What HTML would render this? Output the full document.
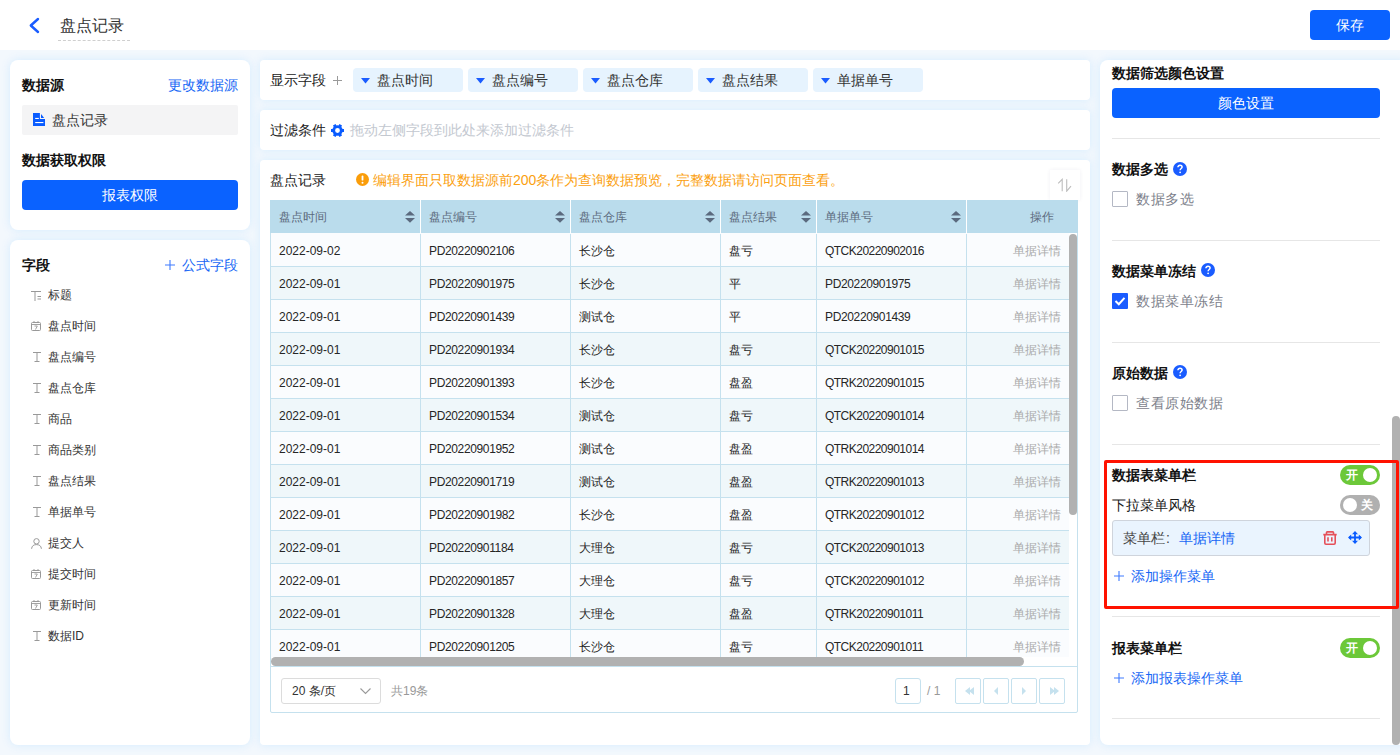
<!DOCTYPE html>
<html><head><meta charset="utf-8">
<style>
*{margin:0;padding:0;box-sizing:border-box}
html,body{width:1400px;height:755px;overflow:hidden}
body{font-family:"Liberation Sans",sans-serif;background:#f3f8fd;position:relative;color:#333;font-size:14px}
.a{position:absolute;white-space:nowrap}
.hdr{position:absolute;left:0;top:0;width:1400px;height:50px;background:#fff}
.card{position:absolute;background:#fff;box-shadow:0 0 8px rgba(208,234,255,0.9)}
.t14{font-size:14px;line-height:20px}
.t12{font-size:12px;line-height:16px}
.b{font-weight:bold;color:#111}
.blue{color:#1767f5}
.btn{position:absolute;background:#0a62ff;color:#fff;border-radius:4px;text-align:center;font-size:14px}
</style></head><body>
<!-- header -->
<div class="hdr">
  <svg class="a" style="left:28px;top:17px" width="12" height="17" viewBox="0 0 12 17"><path d="M10 2 L2.8 8.5 L10 15" fill="none" stroke="#1a5cff" stroke-width="2.4" stroke-linecap="round" stroke-linejoin="round"/></svg>
  <div class="a" style="left:60px;top:15px;font-size:16px;line-height:22px;color:#333">盘点记录</div>
  <div class="a" style="left:58px;top:40px;width:72px;height:0;border-top:1px dashed #cfcfcf"></div>
  <div class="btn" style="left:1310px;top:10px;width:80px;height:30px;line-height:30px">保存</div>
</div>

<!-- left card 1 -->
<div class="card" style="left:10px;top:60px;width:240px;height:170px;border-radius:8px"></div>
<div class="a t14 b" style="left:22px;top:75px">数据源</div>
<div class="a t14 blue" style="left:168px;top:75px">更改数据源</div>
<div class="a" style="left:22px;top:105px;width:216px;height:30px;background:#f4f4f5;border-radius:2px"></div>
<svg class="a" style="left:33px;top:113px" width="12" height="13" viewBox="0 0 12 13"><path d="M0 0H6.9V6H12V13H0Z" fill="#0a5cff"/><path d="M8 0.9V4.9H11.2Z" fill="#0a5cff"/><rect x="2.2" y="4.9" width="3.6" height="1.1" fill="#fff"/><rect x="2.2" y="9" width="8.2" height="1.1" fill="#fff"/></svg>
<div class="a t14" style="left:52px;top:110px;color:#333">盘点记录</div>
<div class="a t14 b" style="left:22px;top:150px">数据获取权限</div>
<div class="btn" style="left:22px;top:180px;width:216px;height:30px;line-height:30px">报表权限</div>

<!-- left card 2 -->
<div class="card" style="left:10px;top:240px;width:240px;height:505px;border-radius:8px"></div>
<div class="a t14 b" style="left:22px;top:255px">字段</div>
<svg class="a" style="left:165px;top:260px" width="10" height="10" viewBox="0 0 10 10"><path d="M5 0V10M0 5H10" stroke="#3f7bff" stroke-width="1.1"/></svg><div class="a t14 blue" style="left:182px;top:255px">公式字段</div>
<svg class="a" style="left:31px;top:291px" width="10" height="10" viewBox="0 0 10 10"><path d="M0 0.5H10M4 0.5V10M6.5 5.5H10M6.5 8H10" stroke="#999" stroke-width="1" fill="none"/></svg>
<div class="a t12" style="left:48px;top:287px;color:#333">标题</div>
<svg class="a" style="left:31px;top:321px" width="10" height="10" viewBox="0 0 10 10"><rect x="0.5" y="1.5" width="9" height="8" rx="1" stroke="#999" fill="none"/><path d="M0.5 3.5H9.5M3 0V2M7 0V2M3.5 5H6.3L4.5 8.5" stroke="#999" stroke-width="0.9" fill="none"/></svg>
<div class="a t12" style="left:48px;top:318px;color:#333">盘点时间</div>
<svg class="a" style="left:33px;top:352px" width="8" height="10" viewBox="0 0 8 10"><path d="M0 0.5H8M4 0.5V9.5M1.5 9.5H6.5" stroke="#999" stroke-width="1" fill="none"/></svg>
<div class="a t12" style="left:48px;top:349px;color:#333">盘点编号</div>
<svg class="a" style="left:33px;top:383px" width="8" height="10" viewBox="0 0 8 10"><path d="M0 0.5H8M4 0.5V9.5M1.5 9.5H6.5" stroke="#999" stroke-width="1" fill="none"/></svg>
<div class="a t12" style="left:48px;top:380px;color:#333">盘点仓库</div>
<svg class="a" style="left:33px;top:414px" width="8" height="10" viewBox="0 0 8 10"><path d="M0 0.5H8M4 0.5V9.5M1.5 9.5H6.5" stroke="#999" stroke-width="1" fill="none"/></svg>
<div class="a t12" style="left:48px;top:411px;color:#333">商品</div>
<svg class="a" style="left:33px;top:445px" width="8" height="10" viewBox="0 0 8 10"><path d="M0 0.5H8M4 0.5V9.5M1.5 9.5H6.5" stroke="#999" stroke-width="1" fill="none"/></svg>
<div class="a t12" style="left:48px;top:442px;color:#333">商品类别</div>
<svg class="a" style="left:33px;top:476px" width="8" height="10" viewBox="0 0 8 10"><path d="M0 0.5H8M4 0.5V9.5M1.5 9.5H6.5" stroke="#999" stroke-width="1" fill="none"/></svg>
<div class="a t12" style="left:48px;top:473px;color:#333">盘点结果</div>
<svg class="a" style="left:33px;top:507px" width="8" height="10" viewBox="0 0 8 10"><path d="M0 0.5H8M4 0.5V9.5M1.5 9.5H6.5" stroke="#999" stroke-width="1" fill="none"/></svg>
<div class="a t12" style="left:48px;top:504px;color:#333">单据单号</div>
<svg class="a" style="left:31px;top:538px" width="11" height="11" viewBox="0 0 11 11"><circle cx="5.5" cy="3.3" r="2.7" stroke="#999" fill="none"/><path d="M0.6 10.8C0.8 7.8 2.8 6.6 5.5 6.6C8.2 6.6 10.2 7.8 10.4 10.8" stroke="#999" fill="none"/></svg>
<div class="a t12" style="left:48px;top:535px;color:#333">提交人</div>
<svg class="a" style="left:31px;top:569px" width="10" height="10" viewBox="0 0 10 10"><rect x="0.5" y="1.5" width="9" height="8" rx="1" stroke="#999" fill="none"/><path d="M0.5 3.5H9.5M3 0V2M7 0V2M3.5 5H6.3L4.5 8.5" stroke="#999" stroke-width="0.9" fill="none"/></svg>
<div class="a t12" style="left:48px;top:566px;color:#333">提交时间</div>
<svg class="a" style="left:31px;top:600px" width="10" height="10" viewBox="0 0 10 10"><rect x="0.5" y="1.5" width="9" height="8" rx="1" stroke="#999" fill="none"/><path d="M0.5 3.5H9.5M3 0V2M7 0V2M3.5 5H6.3L4.5 8.5" stroke="#999" stroke-width="0.9" fill="none"/></svg>
<div class="a t12" style="left:48px;top:597px;color:#333">更新时间</div>
<svg class="a" style="left:33px;top:631px" width="8" height="10" viewBox="0 0 8 10"><path d="M0 0.5H8M4 0.5V9.5M1.5 9.5H6.5" stroke="#999" stroke-width="1" fill="none"/></svg>
<div class="a t12" style="left:48px;top:628px;color:#333">数据ID</div>

<!-- middle -->
<div class="card" style="left:260px;top:60px;width:830px;height:40px;border-radius:4px"></div>
<div class="a t14" style="left:270px;top:70px;color:#222">显示字段</div><svg class="a" style="left:333px;top:76px" width="9" height="9" viewBox="0 0 9 9"><path d="M4.5 0V9M0 4.5H9" stroke="#9a9a9a" stroke-width="1"/></svg>
<div class="a" style="left:353px;top:68px;width:110px;height:24px;background:#e6f3fe;border-radius:4px"></div>
<svg class="a" style="left:361px;top:77.5px" width="9" height="6" viewBox="0 0 9 6"><path d="M0 0H9L4.5 5.5Z" fill="#1a5cff"/></svg>
<div class="a t14" style="left:377px;top:70px;color:#333">盘点时间</div>
<div class="a" style="left:468px;top:68px;width:110px;height:24px;background:#e6f3fe;border-radius:4px"></div>
<svg class="a" style="left:476px;top:77.5px" width="9" height="6" viewBox="0 0 9 6"><path d="M0 0H9L4.5 5.5Z" fill="#1a5cff"/></svg>
<div class="a t14" style="left:492px;top:70px;color:#333">盘点编号</div>
<div class="a" style="left:583px;top:68px;width:110px;height:24px;background:#e6f3fe;border-radius:4px"></div>
<svg class="a" style="left:591px;top:77.5px" width="9" height="6" viewBox="0 0 9 6"><path d="M0 0H9L4.5 5.5Z" fill="#1a5cff"/></svg>
<div class="a t14" style="left:607px;top:70px;color:#333">盘点仓库</div>
<div class="a" style="left:698px;top:68px;width:110px;height:24px;background:#e6f3fe;border-radius:4px"></div>
<svg class="a" style="left:706px;top:77.5px" width="9" height="6" viewBox="0 0 9 6"><path d="M0 0H9L4.5 5.5Z" fill="#1a5cff"/></svg>
<div class="a t14" style="left:722px;top:70px;color:#333">盘点结果</div>
<div class="a" style="left:813px;top:68px;width:110px;height:24px;background:#e6f3fe;border-radius:4px"></div>
<svg class="a" style="left:821px;top:77.5px" width="9" height="6" viewBox="0 0 9 6"><path d="M0 0H9L4.5 5.5Z" fill="#1a5cff"/></svg>
<div class="a t14" style="left:837px;top:70px;color:#333">单据单号</div>
<div class="card" style="left:260px;top:110px;width:830px;height:40px;border-radius:4px"></div>
<div class="a t14" style="left:270px;top:120px;color:#222">过滤条件</div>
<svg class="a" style="left:331px;top:123.5px" width="13" height="13" viewBox="-6.5 -6.5 13 13"><circle r="3.8" stroke="#0a5cff" stroke-width="2.8" fill="none"/><rect x="-1.5" y="-6.5" width="3" height="3" transform="rotate(30)" fill="#0a5cff"/><rect x="-1.5" y="-6.5" width="3" height="3" transform="rotate(90)" fill="#0a5cff"/><rect x="-1.5" y="-6.5" width="3" height="3" transform="rotate(150)" fill="#0a5cff"/><rect x="-1.5" y="-6.5" width="3" height="3" transform="rotate(210)" fill="#0a5cff"/><rect x="-1.5" y="-6.5" width="3" height="3" transform="rotate(270)" fill="#0a5cff"/><rect x="-1.5" y="-6.5" width="3" height="3" transform="rotate(330)" fill="#0a5cff"/></svg>
<div class="a t14" style="left:350px;top:120px;color:#c3c8d0">拖动左侧字段到此处来添加过滤条件</div>

<div class="card" style="left:260px;top:160px;width:830px;height:585px;border-radius:4px"></div>
<div class="a t14" style="left:270px;top:170px;color:#222">盘点记录</div>
<svg class="a" style="left:356px;top:173px" width="13" height="13" viewBox="0 0 13 13"><circle cx="6.5" cy="6.5" r="6.5" fill="#fa9d0a"/><rect x="5.6" y="2.6" width="1.8" height="5" rx="0.9" fill="#fff"/><circle cx="6.5" cy="9.7" r="1" fill="#fff"/></svg>
<div class="a t14" style="left:373px;top:170px;color:#fb9f10">编辑界面只取数据源前200条作为查询数据预览，完整数据请访问页面查看。</div>
<div class="a" style="left:1050px;top:170px;width:30px;height:30px;background:#fff;box-shadow:0 0 4px rgba(60,40,120,0.07)"></div><svg class="a" style="left:1057px;top:178px" width="16" height="14" viewBox="0 0 16 14"><path d="M5.2 13.2V1.3L1.2 5.3M9.7 1.3V13.2L14 8.2" stroke="#bdbdbd" stroke-width="1.1" fill="none"/></svg>
<div class="a" style="left:270px;top:200px;width:808px;height:513px;border:1px solid #c5e1ee;border-radius:2px"></div>
<div class="a" style="left:270px;top:200px;width:808px;height:33px;background:#badcec"></div>
<div class="a" style="left:420px;top:200px;width:1px;height:33px;background:#fff"></div>
<div class="a" style="left:570px;top:200px;width:1px;height:33px;background:#fff"></div>
<div class="a" style="left:720px;top:200px;width:1px;height:33px;background:#fff"></div>
<div class="a" style="left:816px;top:200px;width:1px;height:33px;background:#fff"></div>
<div class="a" style="left:966px;top:200px;width:1px;height:33px;background:#fff"></div>
<div class="a t12" style="left:279px;top:209px;color:#5c6b7e">盘点时间</div>
<svg class="a" style="left:405px;top:210.5px" width="10" height="12" viewBox="0 0 10 12"><path d="M0 4.6H10L5 0Z M0 7.1H10L5 11.7Z" fill="#5b6a7e"/></svg>
<div class="a t12" style="left:429px;top:209px;color:#5c6b7e">盘点编号</div>
<svg class="a" style="left:555px;top:210.5px" width="10" height="12" viewBox="0 0 10 12"><path d="M0 4.6H10L5 0Z M0 7.1H10L5 11.7Z" fill="#5b6a7e"/></svg>
<div class="a t12" style="left:579px;top:209px;color:#5c6b7e">盘点仓库</div>
<svg class="a" style="left:705px;top:210.5px" width="10" height="12" viewBox="0 0 10 12"><path d="M0 4.6H10L5 0Z M0 7.1H10L5 11.7Z" fill="#5b6a7e"/></svg>
<div class="a t12" style="left:729px;top:209px;color:#5c6b7e">盘点结果</div>
<svg class="a" style="left:801px;top:210.5px" width="10" height="12" viewBox="0 0 10 12"><path d="M0 4.6H10L5 0Z M0 7.1H10L5 11.7Z" fill="#5b6a7e"/></svg>
<div class="a t12" style="left:825px;top:209px;color:#5c6b7e">单据单号</div>
<svg class="a" style="left:951px;top:210.5px" width="10" height="12" viewBox="0 0 10 12"><path d="M0 4.6H10L5 0Z M0 7.1H10L5 11.7Z" fill="#5b6a7e"/></svg>
<div class="a t12" style="left:1030px;top:209px;color:#5c6b7e">操作</div>
<div class="a" style="left:271px;top:233px;width:798px;height:424px;overflow:hidden">
<div class="a" style="left:0;top:0px;width:798px;height:34px;background:#fafcfe;border-bottom:1px solid #c5e1ee"></div>
<div class="a" style="left:149px;top:1px;width:1px;height:33px;background:#c5e1ee"></div>
<div class="a" style="left:299px;top:1px;width:1px;height:33px;background:#c5e1ee"></div>
<div class="a" style="left:449px;top:1px;width:1px;height:33px;background:#c5e1ee"></div>
<div class="a" style="left:545px;top:1px;width:1px;height:33px;background:#c5e1ee"></div>
<div class="a" style="left:695px;top:1px;width:1px;height:33px;background:#c5e1ee"></div>
<div class="a t12" style="left:8px;top:10px;color:#262626;">2022-09-02</div>
<div class="a t12" style="left:158px;top:10px;color:#262626;letter-spacing:-0.36px;">PD20220902106</div>
<div class="a t12" style="left:308px;top:10px;color:#262626;">长沙仓</div>
<div class="a t12" style="left:458px;top:10px;color:#262626;">盘亏</div>
<div class="a t12" style="left:554px;top:10px;color:#262626;letter-spacing:-0.52px;">QTCK20220902016</div>
<div class="a t12" style="left:742px;top:10px;color:#aaa">单据详情</div>
<div class="a" style="left:0;top:34px;width:798px;height:33px;background:#eff7fa;border-bottom:1px solid #c5e1ee"></div>
<div class="a" style="left:149px;top:34px;width:1px;height:33px;background:#c5e1ee"></div>
<div class="a" style="left:299px;top:34px;width:1px;height:33px;background:#c5e1ee"></div>
<div class="a" style="left:449px;top:34px;width:1px;height:33px;background:#c5e1ee"></div>
<div class="a" style="left:545px;top:34px;width:1px;height:33px;background:#c5e1ee"></div>
<div class="a" style="left:695px;top:34px;width:1px;height:33px;background:#c5e1ee"></div>
<div class="a t12" style="left:8px;top:43px;color:#262626;">2022-09-01</div>
<div class="a t12" style="left:158px;top:43px;color:#262626;letter-spacing:-0.36px;">PD20220901975</div>
<div class="a t12" style="left:308px;top:43px;color:#262626;">长沙仓</div>
<div class="a t12" style="left:458px;top:43px;color:#262626;">平</div>
<div class="a t12" style="left:554px;top:43px;color:#262626;letter-spacing:-0.36px;">PD20220901975</div>
<div class="a t12" style="left:742px;top:43px;color:#aaa">单据详情</div>
<div class="a" style="left:0;top:67px;width:798px;height:33px;background:#fafcfe;border-bottom:1px solid #c5e1ee"></div>
<div class="a" style="left:149px;top:67px;width:1px;height:33px;background:#c5e1ee"></div>
<div class="a" style="left:299px;top:67px;width:1px;height:33px;background:#c5e1ee"></div>
<div class="a" style="left:449px;top:67px;width:1px;height:33px;background:#c5e1ee"></div>
<div class="a" style="left:545px;top:67px;width:1px;height:33px;background:#c5e1ee"></div>
<div class="a" style="left:695px;top:67px;width:1px;height:33px;background:#c5e1ee"></div>
<div class="a t12" style="left:8px;top:76px;color:#262626;">2022-09-01</div>
<div class="a t12" style="left:158px;top:76px;color:#262626;letter-spacing:-0.36px;">PD20220901439</div>
<div class="a t12" style="left:308px;top:76px;color:#262626;">测试仓</div>
<div class="a t12" style="left:458px;top:76px;color:#262626;">平</div>
<div class="a t12" style="left:554px;top:76px;color:#262626;letter-spacing:-0.36px;">PD20220901439</div>
<div class="a t12" style="left:742px;top:76px;color:#aaa">单据详情</div>
<div class="a" style="left:0;top:100px;width:798px;height:33px;background:#eff7fa;border-bottom:1px solid #c5e1ee"></div>
<div class="a" style="left:149px;top:100px;width:1px;height:33px;background:#c5e1ee"></div>
<div class="a" style="left:299px;top:100px;width:1px;height:33px;background:#c5e1ee"></div>
<div class="a" style="left:449px;top:100px;width:1px;height:33px;background:#c5e1ee"></div>
<div class="a" style="left:545px;top:100px;width:1px;height:33px;background:#c5e1ee"></div>
<div class="a" style="left:695px;top:100px;width:1px;height:33px;background:#c5e1ee"></div>
<div class="a t12" style="left:8px;top:109px;color:#262626;">2022-09-01</div>
<div class="a t12" style="left:158px;top:109px;color:#262626;letter-spacing:-0.36px;">PD20220901934</div>
<div class="a t12" style="left:308px;top:109px;color:#262626;">长沙仓</div>
<div class="a t12" style="left:458px;top:109px;color:#262626;">盘亏</div>
<div class="a t12" style="left:554px;top:109px;color:#262626;letter-spacing:-0.52px;">QTCK20220901015</div>
<div class="a t12" style="left:742px;top:109px;color:#aaa">单据详情</div>
<div class="a" style="left:0;top:133px;width:798px;height:33px;background:#fafcfe;border-bottom:1px solid #c5e1ee"></div>
<div class="a" style="left:149px;top:133px;width:1px;height:33px;background:#c5e1ee"></div>
<div class="a" style="left:299px;top:133px;width:1px;height:33px;background:#c5e1ee"></div>
<div class="a" style="left:449px;top:133px;width:1px;height:33px;background:#c5e1ee"></div>
<div class="a" style="left:545px;top:133px;width:1px;height:33px;background:#c5e1ee"></div>
<div class="a" style="left:695px;top:133px;width:1px;height:33px;background:#c5e1ee"></div>
<div class="a t12" style="left:8px;top:142px;color:#262626;">2022-09-01</div>
<div class="a t12" style="left:158px;top:142px;color:#262626;letter-spacing:-0.36px;">PD20220901393</div>
<div class="a t12" style="left:308px;top:142px;color:#262626;">长沙仓</div>
<div class="a t12" style="left:458px;top:142px;color:#262626;">盘盈</div>
<div class="a t12" style="left:554px;top:142px;color:#262626;letter-spacing:-0.52px;">QTRK20220901015</div>
<div class="a t12" style="left:742px;top:142px;color:#aaa">单据详情</div>
<div class="a" style="left:0;top:166px;width:798px;height:33px;background:#eff7fa;border-bottom:1px solid #c5e1ee"></div>
<div class="a" style="left:149px;top:166px;width:1px;height:33px;background:#c5e1ee"></div>
<div class="a" style="left:299px;top:166px;width:1px;height:33px;background:#c5e1ee"></div>
<div class="a" style="left:449px;top:166px;width:1px;height:33px;background:#c5e1ee"></div>
<div class="a" style="left:545px;top:166px;width:1px;height:33px;background:#c5e1ee"></div>
<div class="a" style="left:695px;top:166px;width:1px;height:33px;background:#c5e1ee"></div>
<div class="a t12" style="left:8px;top:175px;color:#262626;">2022-09-01</div>
<div class="a t12" style="left:158px;top:175px;color:#262626;letter-spacing:-0.36px;">PD20220901534</div>
<div class="a t12" style="left:308px;top:175px;color:#262626;">测试仓</div>
<div class="a t12" style="left:458px;top:175px;color:#262626;">盘亏</div>
<div class="a t12" style="left:554px;top:175px;color:#262626;letter-spacing:-0.52px;">QTCK20220901014</div>
<div class="a t12" style="left:742px;top:175px;color:#aaa">单据详情</div>
<div class="a" style="left:0;top:199px;width:798px;height:33px;background:#fafcfe;border-bottom:1px solid #c5e1ee"></div>
<div class="a" style="left:149px;top:199px;width:1px;height:33px;background:#c5e1ee"></div>
<div class="a" style="left:299px;top:199px;width:1px;height:33px;background:#c5e1ee"></div>
<div class="a" style="left:449px;top:199px;width:1px;height:33px;background:#c5e1ee"></div>
<div class="a" style="left:545px;top:199px;width:1px;height:33px;background:#c5e1ee"></div>
<div class="a" style="left:695px;top:199px;width:1px;height:33px;background:#c5e1ee"></div>
<div class="a t12" style="left:8px;top:208px;color:#262626;">2022-09-01</div>
<div class="a t12" style="left:158px;top:208px;color:#262626;letter-spacing:-0.36px;">PD20220901952</div>
<div class="a t12" style="left:308px;top:208px;color:#262626;">测试仓</div>
<div class="a t12" style="left:458px;top:208px;color:#262626;">盘盈</div>
<div class="a t12" style="left:554px;top:208px;color:#262626;letter-spacing:-0.52px;">QTRK20220901014</div>
<div class="a t12" style="left:742px;top:208px;color:#aaa">单据详情</div>
<div class="a" style="left:0;top:232px;width:798px;height:33px;background:#eff7fa;border-bottom:1px solid #c5e1ee"></div>
<div class="a" style="left:149px;top:232px;width:1px;height:33px;background:#c5e1ee"></div>
<div class="a" style="left:299px;top:232px;width:1px;height:33px;background:#c5e1ee"></div>
<div class="a" style="left:449px;top:232px;width:1px;height:33px;background:#c5e1ee"></div>
<div class="a" style="left:545px;top:232px;width:1px;height:33px;background:#c5e1ee"></div>
<div class="a" style="left:695px;top:232px;width:1px;height:33px;background:#c5e1ee"></div>
<div class="a t12" style="left:8px;top:241px;color:#262626;">2022-09-01</div>
<div class="a t12" style="left:158px;top:241px;color:#262626;letter-spacing:-0.36px;">PD20220901719</div>
<div class="a t12" style="left:308px;top:241px;color:#262626;">测试仓</div>
<div class="a t12" style="left:458px;top:241px;color:#262626;">盘盈</div>
<div class="a t12" style="left:554px;top:241px;color:#262626;letter-spacing:-0.52px;">QTRK20220901013</div>
<div class="a t12" style="left:742px;top:241px;color:#aaa">单据详情</div>
<div class="a" style="left:0;top:265px;width:798px;height:33px;background:#fafcfe;border-bottom:1px solid #c5e1ee"></div>
<div class="a" style="left:149px;top:265px;width:1px;height:33px;background:#c5e1ee"></div>
<div class="a" style="left:299px;top:265px;width:1px;height:33px;background:#c5e1ee"></div>
<div class="a" style="left:449px;top:265px;width:1px;height:33px;background:#c5e1ee"></div>
<div class="a" style="left:545px;top:265px;width:1px;height:33px;background:#c5e1ee"></div>
<div class="a" style="left:695px;top:265px;width:1px;height:33px;background:#c5e1ee"></div>
<div class="a t12" style="left:8px;top:274px;color:#262626;">2022-09-01</div>
<div class="a t12" style="left:158px;top:274px;color:#262626;letter-spacing:-0.36px;">PD20220901982</div>
<div class="a t12" style="left:308px;top:274px;color:#262626;">长沙仓</div>
<div class="a t12" style="left:458px;top:274px;color:#262626;">盘盈</div>
<div class="a t12" style="left:554px;top:274px;color:#262626;letter-spacing:-0.52px;">QTRK20220901012</div>
<div class="a t12" style="left:742px;top:274px;color:#aaa">单据详情</div>
<div class="a" style="left:0;top:298px;width:798px;height:33px;background:#eff7fa;border-bottom:1px solid #c5e1ee"></div>
<div class="a" style="left:149px;top:298px;width:1px;height:33px;background:#c5e1ee"></div>
<div class="a" style="left:299px;top:298px;width:1px;height:33px;background:#c5e1ee"></div>
<div class="a" style="left:449px;top:298px;width:1px;height:33px;background:#c5e1ee"></div>
<div class="a" style="left:545px;top:298px;width:1px;height:33px;background:#c5e1ee"></div>
<div class="a" style="left:695px;top:298px;width:1px;height:33px;background:#c5e1ee"></div>
<div class="a t12" style="left:8px;top:307px;color:#262626;">2022-09-01</div>
<div class="a t12" style="left:158px;top:307px;color:#262626;letter-spacing:-0.36px;">PD20220901184</div>
<div class="a t12" style="left:308px;top:307px;color:#262626;">大理仓</div>
<div class="a t12" style="left:458px;top:307px;color:#262626;">盘亏</div>
<div class="a t12" style="left:554px;top:307px;color:#262626;letter-spacing:-0.52px;">QTCK20220901013</div>
<div class="a t12" style="left:742px;top:307px;color:#aaa">单据详情</div>
<div class="a" style="left:0;top:331px;width:798px;height:33px;background:#fafcfe;border-bottom:1px solid #c5e1ee"></div>
<div class="a" style="left:149px;top:331px;width:1px;height:33px;background:#c5e1ee"></div>
<div class="a" style="left:299px;top:331px;width:1px;height:33px;background:#c5e1ee"></div>
<div class="a" style="left:449px;top:331px;width:1px;height:33px;background:#c5e1ee"></div>
<div class="a" style="left:545px;top:331px;width:1px;height:33px;background:#c5e1ee"></div>
<div class="a" style="left:695px;top:331px;width:1px;height:33px;background:#c5e1ee"></div>
<div class="a t12" style="left:8px;top:340px;color:#262626;">2022-09-01</div>
<div class="a t12" style="left:158px;top:340px;color:#262626;letter-spacing:-0.36px;">PD20220901857</div>
<div class="a t12" style="left:308px;top:340px;color:#262626;">大理仓</div>
<div class="a t12" style="left:458px;top:340px;color:#262626;">盘亏</div>
<div class="a t12" style="left:554px;top:340px;color:#262626;letter-spacing:-0.52px;">QTCK20220901012</div>
<div class="a t12" style="left:742px;top:340px;color:#aaa">单据详情</div>
<div class="a" style="left:0;top:364px;width:798px;height:33px;background:#eff7fa;border-bottom:1px solid #c5e1ee"></div>
<div class="a" style="left:149px;top:364px;width:1px;height:33px;background:#c5e1ee"></div>
<div class="a" style="left:299px;top:364px;width:1px;height:33px;background:#c5e1ee"></div>
<div class="a" style="left:449px;top:364px;width:1px;height:33px;background:#c5e1ee"></div>
<div class="a" style="left:545px;top:364px;width:1px;height:33px;background:#c5e1ee"></div>
<div class="a" style="left:695px;top:364px;width:1px;height:33px;background:#c5e1ee"></div>
<div class="a t12" style="left:8px;top:373px;color:#262626;">2022-09-01</div>
<div class="a t12" style="left:158px;top:373px;color:#262626;letter-spacing:-0.36px;">PD20220901328</div>
<div class="a t12" style="left:308px;top:373px;color:#262626;">大理仓</div>
<div class="a t12" style="left:458px;top:373px;color:#262626;">盘盈</div>
<div class="a t12" style="left:554px;top:373px;color:#262626;letter-spacing:-0.52px;">QTRK20220901011</div>
<div class="a t12" style="left:742px;top:373px;color:#aaa">单据详情</div>
<div class="a" style="left:0;top:397px;width:798px;height:33px;background:#fafcfe;border-bottom:1px solid #c5e1ee"></div>
<div class="a" style="left:149px;top:397px;width:1px;height:33px;background:#c5e1ee"></div>
<div class="a" style="left:299px;top:397px;width:1px;height:33px;background:#c5e1ee"></div>
<div class="a" style="left:449px;top:397px;width:1px;height:33px;background:#c5e1ee"></div>
<div class="a" style="left:545px;top:397px;width:1px;height:33px;background:#c5e1ee"></div>
<div class="a" style="left:695px;top:397px;width:1px;height:33px;background:#c5e1ee"></div>
<div class="a t12" style="left:8px;top:406px;color:#262626;">2022-09-01</div>
<div class="a t12" style="left:158px;top:406px;color:#262626;letter-spacing:-0.36px;">PD20220901205</div>
<div class="a t12" style="left:308px;top:406px;color:#262626;">长沙仓</div>
<div class="a t12" style="left:458px;top:406px;color:#262626;">盘亏</div>
<div class="a t12" style="left:554px;top:406px;color:#262626;letter-spacing:-0.52px;">QTCK20220901011</div>
<div class="a t12" style="left:742px;top:406px;color:#aaa">单据详情</div>
</div>
<div class="a" style="left:1069px;top:234px;width:8px;height:281px;background:#b1b1b1;border-radius:4px"></div>
<div class="a" style="left:271px;top:657px;width:753px;height:9px;background:#b1b1b1;border-radius:4.5px"></div>
<div class="a" style="left:270px;top:666px;width:808px;height:1px;background:#c5e1ee"></div>
<div class="a" style="left:281px;top:678px;width:100px;height:26px;border:1px solid #dcdcdc;border-radius:3px;background:#fff"></div>
<div class="a t12" style="left:292px;top:683px;color:#333">20 条/页</div>
<svg class="a" style="left:360px;top:688px" width="11" height="7" viewBox="0 0 11 7"><path d="M0.5 0.5L5.5 5.5L10.5 0.5" stroke="#999" fill="none" stroke-width="1.1"/></svg>
<div class="a t12" style="left:391px;top:683px;color:#999">共19条</div>
<div class="a" style="left:895px;top:678px;width:26px;height:26px;border:1px solid #c5e1ee;border-radius:3px;background:#fff"></div>
<div class="a t12" style="left:903px;top:683px;color:#333">1</div>
<div class="a t12" style="left:927px;top:683px;color:#999">/ 1</div>
<div class="a" style="left:955px;top:678px;width:26px;height:26px;border:1px solid #c5e1ee;border-radius:2px;background:#fff"></div>
<svg class="a" style="left:961px;top:686px" width="14" height="10" viewBox="0 0 14 10"><path d="M4 5L9 1V9Z M8 5L13 1V9Z" fill="#c5e1ee"/></svg>
<div class="a" style="left:983px;top:678px;width:26px;height:26px;border:1px solid #c5e1ee;border-radius:2px;background:#fff"></div>
<svg class="a" style="left:989px;top:686px" width="14" height="10" viewBox="0 0 14 10"><path d="M5 5L9 1V9Z" fill="#c5e1ee"/></svg>
<div class="a" style="left:1011px;top:678px;width:26px;height:26px;border:1px solid #c5e1ee;border-radius:2px;background:#fff"></div>
<svg class="a" style="left:1017px;top:686px" width="14" height="10" viewBox="0 0 14 10"><path d="M9 5L5 1V9Z" fill="#c5e1ee"/></svg>
<div class="a" style="left:1039px;top:678px;width:26px;height:26px;border:1px solid #c5e1ee;border-radius:2px;background:#fff"></div>
<svg class="a" style="left:1045px;top:686px" width="14" height="10" viewBox="0 0 14 10"><path d="M5 1L10 5L5 9Z M9 1L14 5L9 9Z" fill="#c5e1ee"/></svg>

<!-- right -->
<div class="card" style="left:1100px;top:60px;width:310px;height:685px;border-radius:8px"></div>
<div class="a t14 b" style="left:1112px;top:63px;">数据筛选颜色设置</div>
<div class="btn" style="left:1112px;top:88px;width:268px;height:30px;line-height:30px">颜色设置</div>
<div class="a" style="left:1112px;top:138px;width:268px;height:1px;background:#e6e6e6"></div>
<div class="a t14 b" style="left:1112px;top:159px;">数据多选</div>
<svg class="a" style="left:1173px;top:162px" width="14" height="14" viewBox="0 0 14 14"><circle cx="7" cy="7" r="7" fill="#1a5cff"/><path d="M4.9 5.3C4.9 4 5.9 3.3 7 3.3C8.2 3.3 9.1 4 9.1 5.1C9.1 6.4 7.1 6.6 7.1 8.2" stroke="#fff" stroke-width="1.5" fill="none"/><circle cx="7.1" cy="10.3" r="0.9" fill="#fff"/></svg>
<div class="a" style="left:1112px;top:191px;width:16px;height:16px;border:1px solid #b4b8c4;border-radius:1px;background:#fff"></div>
<div class="a t14" style="left:1136px;top:189px;color:#7d818b;letter-spacing:0.55px">数据多选</div>
<div class="a" style="left:1112px;top:240px;width:268px;height:1px;background:#e6e6e6"></div>
<div class="a t14 b" style="left:1112px;top:261px;">数据菜单冻结</div>
<svg class="a" style="left:1201px;top:263px" width="14" height="14" viewBox="0 0 14 14"><circle cx="7" cy="7" r="7" fill="#1a5cff"/><path d="M4.9 5.3C4.9 4 5.9 3.3 7 3.3C8.2 3.3 9.1 4 9.1 5.1C9.1 6.4 7.1 6.6 7.1 8.2" stroke="#fff" stroke-width="1.5" fill="none"/><circle cx="7.1" cy="10.3" r="0.9" fill="#fff"/></svg>
<svg class="a" style="left:1112px;top:293px" width="16" height="16" viewBox="0 0 16 16"><rect width="16" height="16" rx="1" fill="#1a5cff"/><path d="M3.5 8L6.8 11.2L12.5 4.8" stroke="#fff" stroke-width="2" fill="none"/></svg>
<div class="a t14" style="left:1136px;top:291px;color:#7d818b;letter-spacing:0.55px">数据菜单冻结</div>
<div class="a" style="left:1112px;top:342px;width:268px;height:1px;background:#e6e6e6"></div>
<div class="a t14 b" style="left:1112px;top:363px;">原始数据</div>
<svg class="a" style="left:1173px;top:365px" width="14" height="14" viewBox="0 0 14 14"><circle cx="7" cy="7" r="7" fill="#1a5cff"/><path d="M4.9 5.3C4.9 4 5.9 3.3 7 3.3C8.2 3.3 9.1 4 9.1 5.1C9.1 6.4 7.1 6.6 7.1 8.2" stroke="#fff" stroke-width="1.5" fill="none"/><circle cx="7.1" cy="10.3" r="0.9" fill="#fff"/></svg>
<div class="a" style="left:1112px;top:395px;width:16px;height:16px;border:1px solid #b4b8c4;border-radius:1px;background:#fff"></div>
<div class="a t14" style="left:1136px;top:393px;color:#7d818b;letter-spacing:0.55px">查看原始数据</div>
<div class="a" style="left:1112px;top:444px;width:268px;height:1px;background:#e6e6e6"></div>
<div class="a t14 b" style="left:1112px;top:465px;">数据表菜单栏</div>
<div class="a" style="left:1340px;top:465px;width:40px;height:20px;border-radius:10px;background:#6cc839"></div>
<div class="a" style="left:1363px;top:468px;width:14px;height:14px;border-radius:7px;background:#fff"></div>
<div class="a" style="left:1346px;top:467px;font-size:12px;line-height:16px;color:#fff;font-weight:bold">开</div>
<div class="a t14" style="left:1112px;top:495px;color:#1a1a1a">下拉菜单风格</div>
<div class="a" style="left:1340px;top:495px;width:40px;height:20px;border-radius:10px;background:#b0b0b0"></div>
<div class="a" style="left:1343px;top:498px;width:14px;height:14px;border-radius:7px;background:#fff"></div>
<div class="a" style="left:1361px;top:497px;font-size:12px;line-height:16px;color:#fff;font-weight:bold">关</div>
<div class="a" style="left:1112px;top:520px;width:258px;height:36px;background:#eaf4fe;border:1px solid #cfd4dc;border-radius:3px"></div>
<div class="a t14" style="left:1123px;top:528px;color:#444">菜单栏</div>
<div class="a t14" style="left:1166px;top:528px;color:#444">:</div>
<div class="a t14 blue" style="left:1179px;top:528px;">单据详情</div>
<svg class="a" style="left:1323px;top:531px" width="14" height="14" viewBox="0 0 14 14"><path d="M0.3 3.6H13.7M3.5 3.6V1.6Q3.5 0.9 4.2 0.9H9.8Q10.5 0.9 10.5 1.6V3.6M1.8 3.6V12Q1.8 13.2 3 13.2H11Q12.2 13.2 12.2 12V3.6M5 6.2V10.5M8.8 6.2V10.5" stroke="#e5505a" stroke-width="1.6" fill="none"/></svg>
<svg class="a" style="left:1348px;top:531px" width="14" height="13" viewBox="0 0 14 13"><path d="M7 1V12M1 6.5H13" stroke="#0a5cff" stroke-width="1.8"/><path d="M7 0L10 3.2H4Z M7 13L10 9.8H4Z M0 6.5L3.2 3.5V9.5Z M14 6.5L10.8 3.5V9.5Z" fill="#0a5cff"/></svg>
<svg class="a" style="left:1114px;top:571px" width="10" height="10" viewBox="0 0 10 10"><path d="M5 0V10M0 5H10" stroke="#3f7bff" stroke-width="1.1"/></svg>
<div class="a t14 blue" style="left:1131px;top:566px;">添加操作菜单</div>
<div class="a" style="left:1112px;top:616px;width:268px;height:1px;background:#e6e6e6"></div>
<div class="a t14 b" style="left:1112px;top:638px;">报表菜单栏</div>
<div class="a" style="left:1340px;top:638px;width:40px;height:20px;border-radius:10px;background:#6cc839"></div>
<div class="a" style="left:1363px;top:641px;width:14px;height:14px;border-radius:7px;background:#fff"></div>
<div class="a" style="left:1346px;top:640px;font-size:12px;line-height:16px;color:#fff;font-weight:bold">开</div>
<svg class="a" style="left:1114px;top:673px" width="10" height="10" viewBox="0 0 10 10"><path d="M5 0V10M0 5H10" stroke="#3f7bff" stroke-width="1.1"/></svg>
<div class="a t14 blue" style="left:1131px;top:668px;">添加报表操作菜单</div>
<div class="a" style="left:1112px;top:718px;width:268px;height:1px;background:#e6e6e6"></div>
<div class="a" style="left:1392px;top:416px;width:8px;height:329px;background:#b1b1b1;border-radius:4px"></div>
<div class="a" style="left:1104px;top:460px;width:295px;height:149px;border:3px solid #ff1200;border-radius:2px"></div>
</body></html>
